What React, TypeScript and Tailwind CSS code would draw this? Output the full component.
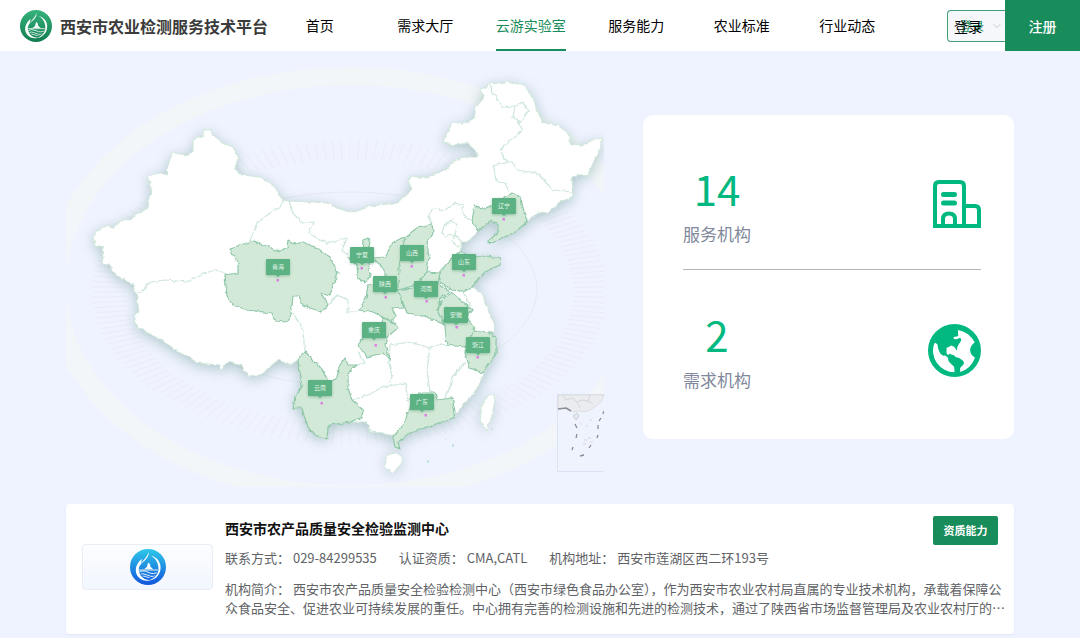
import { Fragment } from "react";
import { ChevronDown } from "lucide-react";

const navItems = ["首页", "需求大厅", "云游实验室", "服务能力", "农业标准", "行业动态"];

const mainland =
  "M93,238 95,232 108,225 111,228 118,225 120,221 127,220 148,208 149,197 152,194 150,183 147,176 160,173 168,174 167,169 172,153 188,155 193,152 193,141 203,135 203,130 211,130 212,134 223,143 233,147 238,157 235,170 242,175 260,177 273,185 283,200 289,201 313,202 327,203 340,209 353,213 370,206 397,203 412,189 409,183 411,176 427,178 448,168 453,161 468,157 478,157 477,152 467,143 455,145 443,143 452,123 463,124 473,119 475,108 485,97 480,90 490,84 507,82 523,85 532,95 542,123 557,125 568,133 571,145 582,146 592,140 603,138 598,153 588,174 572,177 573,197 560,202 547,214 538,212 527,222 515,232 490,244 489,241 498,232 498,223 490,221 477,232 468,242 462,242 460,252 473,257 487,256 501,259 500,265 485,272 472,287 482,293 486,305 494,323 495,332 488,331 496,340 496,353 485,372 475,392 457,412 453,418 430,426 410,433 398,442 400,449 395,447 393,437 383,433 370,432 367,422 352,422 330,425 328,427 327,439 315,435 307,427 302,408 293,408 295,397 302,385 298,360 290,365 278,360 260,375 248,376 240,365 227,362 221,371 219,365 198,363 173,348 158,338 138,328 134,315 139,313 137,297 132,283 115,275 112,267 101,262 104,258 103,247 95,245Z";
const hainan = "M388,455 395,452 403,457 401,464 393,473 385,467 386,458Z";
const taiwan = "M488,396 493,394 495,400 492,415 486,432 480,420 482,406Z";

const provinces = [
  "M230,248 253,241 273,249 280,251 287,248 288,240 295,244 303,242 317,248 330,257 338,273 332,288 330,296 320,293 328,305 322,312 310,308 303,305 299,296 293,296 291,315 287,322 275,321 272,313 247,310 233,305 227,297 225,275 238,273 238,262 233,255Z",
  "M363,240 368,238 370,242 367,255 370,275 365,283 358,278 357,265 350,258 362,255Z",
  "M405,237 393,242 385,257 373,258 385,270 385,283 368,285 366,298 359,310 373,312 392,322 396,316 392,308 404,307 398,290 399,267Z",
  "M405,237 417,228 432,223 433,233 427,242 429,257 427,272 417,285 398,290 399,267Z",
  "M427,272 440,273 438,283 450,292 440,298 438,312 445,325 428,317 407,313 398,290 413,288Z",
  "M440,273 447,263 460,252 473,257 487,256 501,259 500,265 485,272 472,287 463,291 452,290 440,282Z",
  "M443,298 452,293 463,302 473,310 467,317 475,330 468,340 465,347 447,345 445,327 437,310Z",
  "M475,330 487,332 496,338 496,353 483,373 470,368 465,353 468,340Z",
  "M393,322 398,328 387,337 385,345 390,360 383,353 367,357 358,345 363,337 380,333 383,318Z",
  "M420,393 435,393 437,400 452,398 455,412 453,418 430,426 410,433 398,442 400,449 395,447 393,437 402,427 408,413 412,403Z",
  "M305,351 310,357 320,367 330,383 337,377 340,365 345,358 348,365 357,365 348,373 348,388 352,400 363,410 362,417 350,422 330,425 328,427 327,439 315,435 307,427 302,408 293,408 295,397 302,385 298,360Z",
  "M475,205 472,220 478,231 490,221 498,223 498,232 489,241 490,244 515,232 527,222 520,197 512,193 497,203 480,210Z",
];

const borders = [
  "M283,200 280,207 270,213 257,223 250,240",
  "M289,201 293,213 302,223 314,222 309,233 327,244 340,240 347,238 342,250 350,258",
  "M138,292 143,291 150,282 165,280 187,282 203,273 217,270 227,274",
  "M293,313 302,327 305,350",
  "M328,305 337,295 348,300 348,312 358,312",
  "M390,345 410,342 430,348 442,344 447,345",
  "M404,307 415,315 428,317 445,325",
  "M430,348 427,370 430,393",
  "M390,345 389,363 392,377 390,385",
  "M352,400 368,395 383,387 405,383 408,400 420,393",
  "M357,365 365,363 358,352",
  "M465,362 452,377 450,388 445,398",
  "M373,258 385,268",
  "M490,84 492,92 503,107 515,106 513,117 520,123 529,110 523,103 515,106",
  "M520,123 522,130 500,150 507,162 493,166 498,182 505,183 508,190",
  "M507,162 512,162 517,170 537,173 553,190 572,192",
  "M432,223 428,217 433,208 445,210 455,203 463,205 463,215 472,220",
  "M442,233 444,226 452,220 457,226 455,235 446,236Z",
  "M455,235 462,242 457,247 453,241Z",
  "M427,272 438,275 443,266",
  "M463,291 467,300 473,310",
];

const markers = [
  { name: "青海", x: 278, y: 267, dotX: 278, dotY: 280 },
  { name: "宁夏", x: 362, y: 255, dotX: 362, dotY: 268 },
  { name: "山西", x: 412, y: 253, dotX: 412, dotY: 266 },
  { name: "山东", x: 464, y: 262, dotX: 464, dotY: 275 },
  { name: "辽宁", x: 504, y: 206, dotX: 504, dotY: 219 },
  { name: "陕西", x: 385, y: 284, dotX: 386, dotY: 297 },
  { name: "河南", x: 426, y: 289, dotX: 427, dotY: 301 },
  { name: "安徽", x: 456, y: 315, dotX: 457, dotY: 327 },
  { name: "重庆", x: 374, y: 330, dotX: 376, dotY: 345 },
  { name: "浙江", x: 478, y: 345, dotX: 478, dotY: 357 },
  { name: "云南", x: 320, y: 388, dotX: 322, dotY: 403 },
  { name: "广东", x: 422, y: 402, dotX: 426, dotY: 415 },
];

const ticks = Array.from({ length: 180 }, (_, i) => {
  const a = (i * Math.PI * 2) / 180;
  return {
    x1: 350 + 258 * Math.cos(a),
    y1: 292 + 152 * Math.sin(a),
    x2: 350 + 224 * Math.cos(a),
    y2: 292 + 132 * Math.sin(a),
  };
});

function Emblem({ id, from, to, className }: { id: string; from: string; to: string; className: string }) {
  return (
    <svg viewBox="0 0 48 48" className={className} aria-hidden="true">
      <defs>
        <linearGradient id={id} x1="0" y1="0" x2="0" y2="1">
          <stop offset="0" stopColor={from} />
          <stop offset="1" stopColor={to} />
        </linearGradient>
        <clipPath id={id + "-field"}>
          <circle cx="24.5" cy="26" r="13" />
        </clipPath>
      </defs>
      <circle cx="24" cy="24" r="24" fill={`url(#${id})`} />
      <path
        d="M25 4C25 10 22 13 19 16C13 20 11 25 12 30C14 38 20 41.500 27 41.500C19 44 11 40 8.500 33C6 25 10 18 16 13L14.500 19C18 15 23 10 25 4Z"
        fill="white"
      />
      <path d="M28 9C38 11 43 21 40 30C38 37 31 42 25 42C33 39 37.500 34 38 27C38 19 35 13 28 9Z" fill="white" />
      <g clipPath={`url(#${id}-field)`}>
        <path d="M19 27L21 25L22.500 24L23.500 20L25 18L26.500 20L27.500 24L29 25L31 27Z" fill="white" opacity="0.95" />
        <path
          d="M10 28H39M10 32Q17 27 24 31T39 30M10 35Q17 31 24 35T39 33M12 39Q17 34 24 38T39 37"
          fill="none"
          stroke="white"
          strokeWidth="1.300"
          opacity="0.9"
        />
      </g>
    </svg>
  );
}

function BuildingIcon() {
  return (
    <svg viewBox="0 0 48 48" className="size-12" fill="none" stroke="#00b880" strokeWidth="4" aria-hidden="true">
      <path d="M2 46V6Q2 2 6 2H27Q31 2 31 6V46" />
      <path d="M31 26H42Q46 26 46 30V46H2V40" />
      <path d="M10 46V39Q10 33.500 16 33.500T22 39V46" />
      <path d="M10.500 14.500H21.500M10.500 23H21.500" strokeWidth="5" strokeLinecap="round" />
    </svg>
  );
}

function GlobeIcon() {
  return (
    <svg viewBox="863 637 160 160" className="size-[53px]" aria-hidden="true">
      <circle cx="943" cy="717" r="80" fill="#00b880" />
      <g fill="white">
        <path d="M882 695Q887 692 892 700Q892 712 897 720Q901 731 909 733Q915 730 922 738L924 738Q922 747 929 754L941 765Q943 768 943 783A66 66 0 0 1 882 695Z" />
        <path d="M953 655Q986 660 1004 692Q990 703 990 717Q992 731 1005 739Q992 773 960 782V770L970 759Q974 754 969 748L957 740Q947 740 941 731L927 727L924 731Q917 727 919 717V709Q927 707 932 702L942 706L950 717L952 705L963 687Q965 678 956 680Q944 687 939 679Q941 675 951 675Q956 672 954 668Z" />
      </g>
    </svg>
  );
}

function ChinaMap() {
  return (
    <svg viewBox="66 52 538 435" className="block w-full" role="img" aria-label="服务机构分布地图">
      <defs>
        <filter id="coast" x="-10%" y="-10%" width="120%" height="120%">
          <feTurbulence type="fractalNoise" baseFrequency="0.18" numOctaves="2" seed="4" result="noise" />
          <feDisplacementMap in="SourceGraphic" in2="noise" scale="4" xChannelSelector="R" yChannelSelector="G" />
        </filter>
        <filter id="glow" x="-10%" y="-10%" width="120%" height="120%">
          <feGaussianBlur stdDeviation="7" />
        </filter>
        <filter id="label-shadow" x="-30%" y="-30%" width="160%" height="180%">
          <feDropShadow dx="0" dy="1" stdDeviation="1.500" floodColor="#3d8a62" floodOpacity="0.45" />
        </filter>
      </defs>

      <path
        fillRule="evenodd"
        fill="#f2f6f9"
        d="M45,285a305,218 0 1 0 610,0a305,218 0 1 0 -610,0ZM66,285a284,200 0 1 0 568,0a284,200 0 1 0 -568,0Z"
      />
      <ellipse cx="350" cy="289" rx="187" ry="97" fill="none" stroke="#e7eaf2" />
      <g stroke="#ecebf8" strokeWidth="1">
        {ticks.map((t, i) => (
          <line key={i} {...t} />
        ))}
      </g>

      <g fill="#7fa5a0" opacity="0.6" filter="url(#glow)">
        <path d={mainland} transform="translate(0 3)" />
        <path d={hainan + taiwan} transform="translate(0 2)" opacity="0.8" />
      </g>
      <g filter="url(#coast)" strokeLinejoin="round">
        <path d={mainland + hainan + taiwan} fill="white" stroke="#cfe8da" />
        <path d={borders.join("")} fill="none" stroke="#cde7da" strokeWidth="1.200" />
        <path d={provinces.join("")} fill="#d3e9d8" stroke="#8fc7a9" strokeWidth="1.200" />
        <g fill="#b9dfca">
          <circle cx="453" cy="445" r="1" />
          <circle cx="446" cy="440" r="1" />
          <circle cx="428" cy="461" r="1" />
          <circle cx="492" cy="429" r="1" />
        </g>
      </g>

      <rect x="557.500" y="394.500" width="60" height="77" fill="#eff3fd" stroke="#dbe4f5" />
      <path
        d="M558,395H604L601,402 596,406 590,410 584,412 578,411 573,412 568,408 558,409Z"
        fill="#ebecef"
        stroke="#d5d6da"
        strokeWidth="0.700"
      />
      <path d="M563,395L566,400 572,398 577,402 582,400M577,402L580,408M590,395L588,401 593,404M582,400L588,401" fill="none" stroke="#d5d6da" />
      <path d="M573,416L577,413 579,416 576,420Z" fill="#e8e9ec" stroke="#cfd0d4" />
      <path d="M558,409L566,408 571,411" fill="none" stroke="#8b8d92" strokeWidth="1.500" />
      <path
        d="M575,424L577,428M577,434L576,438M573,447L572,450M580,456L584,455M589,448L591,445M597,438L598,435M598,429V425M599,421L601,418M603,414L604,411"
        fill="none"
        stroke="#8b8d92"
        strokeWidth="1.300"
      />
      <path d="M580,424h2M586,426h2M590,420h2M584,440h3M588,438h3M583,444h3M590,442h3" stroke="#d3d5dc" />

      {markers.map((m) => (
        <Fragment key={m.name}>
          <g fill="#5bb282" filter="url(#label-shadow)">
            <rect x={m.x - 12} y={m.y - 8} width="24" height="16" rx="1" />
            <path d={`M${m.x - 2},${m.y + 8}h4l-2,2Z`} />
          </g>
          <text x={m.x} y={m.y + 2} textAnchor="middle" fontSize="6" fill="#e9f6ee">
            {m.name}
          </text>
          <rect x={m.dotX - 1.5} y={m.dotY - 1} width="2.500" height="2.500" rx="0.500" fill="#dd7fe3" />
        </Fragment>
      ))}
    </svg>
  );
}

export default function App() {
  return (
    <div className="min-h-screen bg-[#eff3ff] font-['Noto_Sans_CJK_SC',sans-serif] text-black">
      <header className="flex h-[51px] items-stretch bg-white text-sm">
        <a href="#home" className="flex shrink-0 items-center gap-2 pl-5">
          <Emblem id="brand" from="#36b37c" to="#127c50" className="size-8" />
          <span className="w-[207px] pt-px text-base font-bold whitespace-nowrap text-[#3b3b3b]">西安市农业检测服务技术平台</span>
        </a>
        <nav className="grid max-w-[633px] flex-1 grid-cols-6">
          {navItems.map((item) => (
            <a
              key={item}
              href={"#" + item}
              aria-current={item === "云游实验室" ? "page" : undefined}
              className="group flex justify-center whitespace-nowrap aria-[current=page]:text-[#188c5a]"
            >
              <span className="flex items-center border-b-2 border-transparent group-aria-[current=page]:border-[#188c5a]">
                {item}
              </span>
            </a>
          ))}
        </nav>
        <div className="ml-auto flex items-center">
          <button
            type="button"
            className="relative flex h-8 w-[58px] items-center justify-between rounded-l border border-r-0 border-[#3f9f75] bg-[#f5f7fb] pl-1.5"
          >
            <span aria-hidden="true" className="absolute left-3 text-xs text-[#188c5a]">
              登录
            </span>
            <span className="relative">登录</span>
            <ChevronDown className="mr-0.5 size-3 text-[#c4c8d0]" strokeWidth={2} />
          </button>
          <button type="button" className="h-full w-[75px] bg-[#188c5a] font-medium text-white">
            注册
          </button>
        </div>
      </header>

      <main className="px-[66px]">
        <section className="flex items-start justify-between">
          <div className="w-[538px] pt-px">
            <ChinaMap />
          </div>
          <dl className="mt-16 w-[371px] rounded-[10px] bg-white pt-[43px] pr-[33px] pb-[43px] pl-10 text-[#7f899b]">
            <div className="flex items-center justify-between border-b border-[#b5b5b5] pb-[19px]">
              <div className="flex flex-col-reverse text-center">
                <dt className="text-[17px] leading-8">服务机构</dt>
                <dd className="text-[42px] leading-[60px] text-[#00b880]">14</dd>
              </div>
              <BuildingIcon />
            </div>
            <div className="flex items-center justify-between pt-[34px]">
              <div className="flex flex-col-reverse text-center">
                <dt className="text-[17px] leading-8">需求机构</dt>
                <dd className="text-[42px] leading-[60px] text-[#00b880]">2</dd>
              </div>
              <GlobeIcon />
            </div>
          </dl>
        </section>

        <article className="mt-[17px] flex items-start gap-3 rounded-sm bg-white pt-3 pr-1 pb-[17px] pl-4 shadow-xs">
          <div className="mt-7 flex h-[46px] w-[131px] shrink-0 items-center justify-center rounded border border-[#e9edf6] bg-linear-to-b from-[#fcfdff] to-[#f2f6fe]">
            <Emblem id="agency" from="#2fc7ea" to="#1156dc" className="size-9" />
          </div>
          <div className="min-w-0 flex-1 text-[#606266]">
            <div className="flex items-start justify-between pr-3">
              <h2 className="text-sm leading-6 font-bold text-[#111]">西安市农产品质量安全检验监测中心</h2>
              <button type="button" className="h-[29px] w-[65px] rounded-xs bg-[#188c5a] text-[11px] font-bold text-white">
                资质能力
              </button>
            </div>
            <p className="flex gap-[22px] text-[13px] leading-[26px]">
              <span>联系方式： 029-84299535</span>
              <span>认证资质： CMA,CATL</span>
              <span>机构地址： 西安市莲湖区西二环193号</span>
            </p>
            <p className="mt-2 text-[13px] leading-[19px]">
              机构简介： 西安市农产品质量安全检验检测中心（西安市绿色食品办公室），作为西安市农业农村局直属的专业技术机构，承载着保障公众食品安全、促进农业可持续发展的重任。中心拥有完善的检测设施和先进的检测技术，通过了陕西省市场监督管理局及农业农村厅的…
            </p>
          </div>
        </article>
      </main>
    </div>
  );
}
